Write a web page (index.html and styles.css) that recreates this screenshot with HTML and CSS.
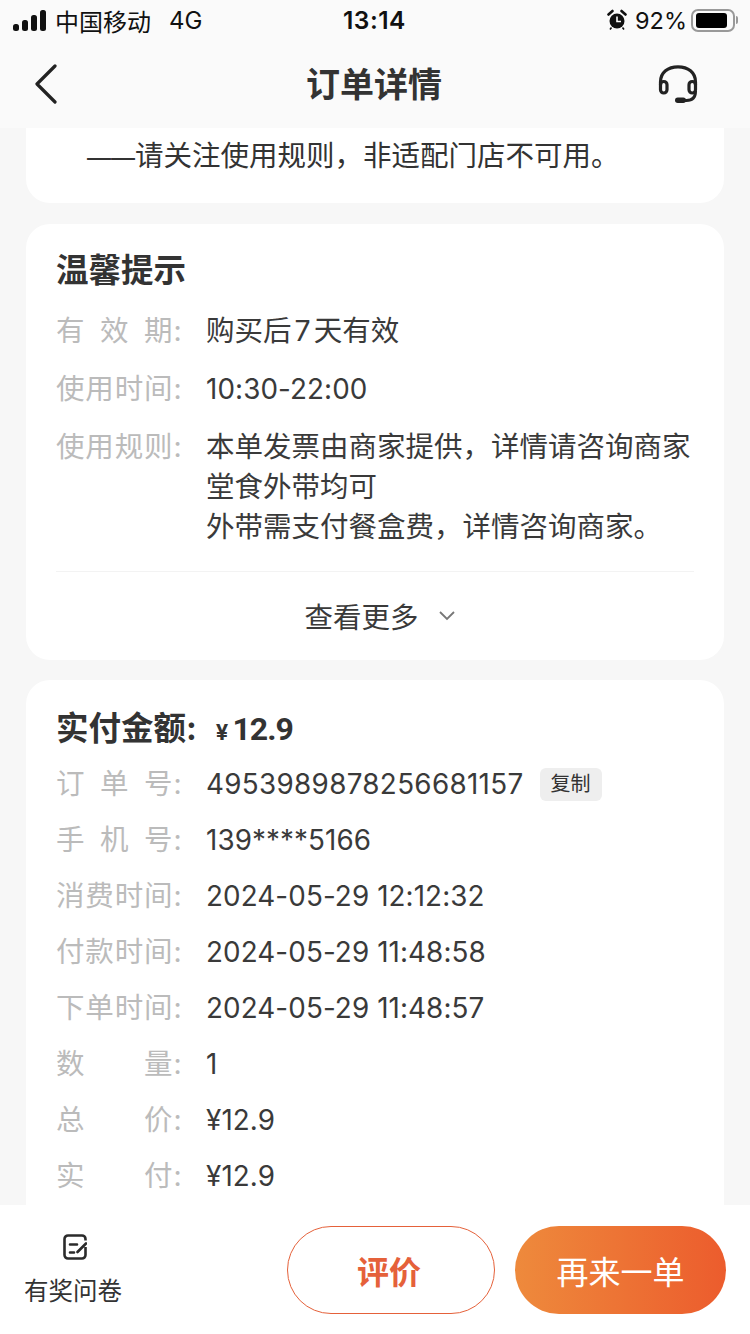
FILE: index.html
```html
<!DOCTYPE html>
<html lang="zh-CN">

<head>
    <meta charset="UTF-8" />
    <meta name="viewport" content="width=device-width, initial-scale=1.0" />
    <title>订单详情</title>
    <link rel="stylesheet" href="styles.css">
</head>

<body>
    <div class="page">
        <header class="top">
            <div class="status-bar">
                <div class="status-left">
                    <svg class="signal" width="34" height="21" viewBox="0 0 34 21">
                        <rect x="0" y="14" width="6" height="7" rx="2.5" />
                        <rect x="9" y="10" width="6" height="11" rx="2.5" />
                        <rect x="18" y="5" width="6" height="16" rx="2.5" />
                        <rect x="27" y="0" width="6" height="21" rx="2.5" />
                    </svg>
                    <span class="carrier">中国移动</span>
                    <span class="network">4G</span>
                </div>
                <div class="status-time">13:14</div>
                <div class="status-right">
                    <svg class="alarm" width="20" height="22" viewBox="0 0 20 22">
                        <circle cx="10" cy="12" r="7.500" fill="#111" />
                        <path d="M10 7.500v5h4" fill="none" stroke="#fff" stroke-width="1.600" />
                        <path d="M1.500 5.500 5.500 2M18.500 5.500 14.500 2" stroke="#111" stroke-width="2.600" stroke-linecap="round" />
                        <path d="M4.500 18.500 3 20.500M15.500 18.500 17 20.500" stroke="#111" stroke-width="1.600" />
                    </svg>
                    <span class="battery-text">92%</span>
                    <div class="battery"><div class="battery-level"></div></div>
                    <div class="battery-tip"></div>
                </div>
            </div>
            <nav class="nav-bar">
                <svg class="back-icon" width="26" height="40" viewBox="0 0 26 40">
                    <path d="M22 2 4 20l18 18" fill="none" stroke="#222" stroke-width="3.200" stroke-linecap="round" stroke-linejoin="round" />
                </svg>
                <h1 class="nav-title">订单详情</h1>
                <svg class="service-icon" width="40" height="38" viewBox="0 0 40 38">
                    <path d="M2.500 20v-3C2.500 7.500 10 1.800 20 1.800S37.500 7.500 37.500 17v3" fill="none" stroke="#222" stroke-width="3.200" />
                    <rect x="2.500" y="16.500" width="6.500" height="11.500" rx="3.200" fill="none" stroke="#222" stroke-width="3.200" />
                    <rect x="31" y="16.500" width="6.500" height="11.500" rx="3.200" fill="none" stroke="#222" stroke-width="3.200" />
                    <path d="M37.500 26c0 6-3 9.500-9 9.500H24" fill="none" stroke="#222" stroke-width="3" />
                    <rect x="17" y="32.500" width="11" height="5.500" rx="2.750" fill="#222" />
                </svg>
            </nav>
        </header>

        <main class="content">
            <section class="card card-tip">
                <p class="tip-line"><span class="tip-dash">——</span>请关注使用规则，非适配门店不可用。</p>
            </section>

            <section class="card card-notice">
                <h2 class="card-title">温馨提示</h2>
                <div class="info-row row-wide">
                    <span class="label"><span class="label-name">有 效 期</span>:</span>
                    <span class="value">购买后<span class="digit-gap">7</span>天有效</span>
                </div>
                <div class="info-row row-wide">
                    <span class="label"><span class="label-name">使用时间</span>:</span>
                    <span class="value value-num">10:30-22:00</span>
                </div>
                <div class="info-row row-wide">
                    <span class="label"><span class="label-name">使用规则</span>:</span>
                    <span class="value">本单发票由商家提供，详情请咨询商家<br>堂食外带均可<br>外带需支付餐盒费，详情咨询商家。</span>
                </div>
                <div class="more">
                    <span>查看更多</span>
                    <svg width="16" height="10" viewBox="0 0 16 10">
                        <path d="M1 1l7 7 7-7" fill="none" stroke="#777" stroke-width="1.800" />
                    </svg>
                </div>
            </section>

            <section class="card card-order">
                <h2 class="card-title pay-title">实付金额:<span class="yen">¥</span><span class="amount">12.9</span></h2>
                <div class="info-row">
                    <span class="label"><span class="label-name">订 单 号</span>:</span>
                    <span class="value value-num value-long">4953989878256681157</span>
                    <span class="copy-btn">复制</span>
                </div>
                <div class="info-row">
                    <span class="label"><span class="label-name">手 机 号</span>:</span>
                    <span class="value value-num">139****5166</span>
                </div>
                <div class="info-row">
                    <span class="label"><span class="label-name">消费时间</span>:</span>
                    <span class="value value-num">2024-05-29 12:12:32</span>
                </div>
                <div class="info-row">
                    <span class="label"><span class="label-name">付款时间</span>:</span>
                    <span class="value value-num">2024-05-29 11:48:58</span>
                </div>
                <div class="info-row">
                    <span class="label"><span class="label-name">下单时间</span>:</span>
                    <span class="value value-num">2024-05-29 11:48:57</span>
                </div>
                <div class="info-row">
                    <span class="label"><span class="label-name">数 量</span>:</span>
                    <span class="value value-num">1</span>
                </div>
                <div class="info-row">
                    <span class="label"><span class="label-name">总 价</span>:</span>
                    <span class="value value-num">¥12.9</span>
                </div>
                <div class="info-row">
                    <span class="label"><span class="label-name">实 付</span>:</span>
                    <span class="value value-num">¥12.9</span>
                </div>
            </section>
        </main>

        <footer class="bottom-bar">
            <div class="survey">
                <svg width="24" height="26" viewBox="0 0 24 26">
                    <path d="M22.500 6.500V5A3.500 3.500 0 0 0 19 1.500H5A3.500 3.500 0 0 0 1.500 5v16A3.500 3.500 0 0 0 5 24.500h14a3.500 3.500 0 0 0 3.500-3.500v-8" fill="none" stroke="#2b2b2b" stroke-width="2.600" />
                    <path d="M7 10.500h7M7 18.500h4" stroke="#2b2b2b" stroke-width="2.600" stroke-linecap="round" />
                    <path d="M14.500 18 23 9.500" stroke="#2b2b2b" stroke-width="2.600" stroke-linecap="round" />
                </svg>
                <span>有奖问卷</span>
            </div>
            <div class="actions">
                <button class="btn btn-outline">评价</button>
                <button class="btn btn-solid">再来一单</button>
            </div>
        </footer>
    </div>
</body>

</html>
```

FILE: styles.css
```css
* {
    box-sizing: border-box;
}

body {
    margin: 0;
    background: #f7f7f7;
    color: #333;
    font-family: Inter, "Noto Sans CJK SC", sans-serif;
}

.page {
    display: flex;
    flex-direction: column;
    height: 1334px;
    overflow: hidden;
}

.top {
    flex: none;
    background: #fafafa;
}

.status-bar {
    display: flex;
    align-items: center;
    justify-content: space-between;
    height: 40px;
    padding: 0 12px 0 13px;
    color: #111;
    font-size: 24px;
    position: relative;
}

.status-left,
.status-right {
    display: flex;
    align-items: center;
}

.signal {
    fill: #111;
    margin-right: 8px;
}

.network {
    margin-left: 18px;
}

.status-time {
    position: absolute;
    left: 343px;
    font-size: 24.5px;
    font-weight: 600;
    letter-spacing: 0.5px;
}

.alarm {
    margin-right: 8px;
}

.battery-text {
    margin-right: 4px;
    font-size: 23.5px;
}

.battery {
    width: 44px;
    height: 23px;
    padding: 2px 3px;
    border: 2px solid #999;
    border-radius: 7px;
}

.battery-level {
    width: 92%;
    height: 100%;
    background: #000;
    border-radius: 3px;
}

.battery-tip {
    width: 2px;
    height: 8px;
    margin-left: 1px;
    background: #999;
    border-radius: 0 2px 2px 0;
}

.nav-bar {
    display: grid;
    grid-template-columns: 1fr auto 1fr;
    align-items: center;
    height: 88px;
    padding: 0 52px;
}

.back-icon {
    margin-left: -19px;
}

.nav-title {
    margin: 0 2px 4px 0;
    font-size: 34px;
    font-weight: 700;
    color: #333;
}

.service-icon {
    justify-self: end;
}

.content {
    flex: 1;
    min-height: 0;
    overflow: hidden;
    padding: 0 26px;
}

.card {
    background: #fff;
    border-radius: 24px;
    margin-bottom: 21px;
    padding: 0 30px;
}

.card-tip {
    height: 75px;
    border-radius: 0 0 24px 24px;
    padding: 8px 0 0 61px;
}

.tip-line {
    margin: 0;
    font-size: 28.5px;
    line-height: 40px;
}

.tip-dash {
    font-size: 24px;
}

.card-notice {
    height: 436px;
    margin-bottom: 20px;
    padding-top: 25px;
}

.card-order {
    height: 600px;
    padding-top: 27px;
}

.card-title {
    margin: 0 0 18px;
    font-size: 32.5px;
    line-height: 44px;
    font-weight: 700;
    color: #333;
}

.pay-title {
    display: flex;
    align-items: baseline;
    margin-bottom: 10px;
}

.yen {
    font-size: 22px;
    margin-left: 19px;
    margin-right: 4px;
}

.amount {
    font-family: Roboto, sans-serif;
    font-size: 32px;
    letter-spacing: -1px;
}

.info-row {
    display: flex;
    align-items: flex-start;
    font-size: 28.5px;
    line-height: 40px;
    margin-bottom: 16px;
}

.row-wide {
    margin-bottom: 18px;
}

.label {
    flex: none;
    width: 150px;
    color: #bbb;
}

.label-name {
    display: inline-block;
    width: 116.5px;
    margin-right: 1px;
    text-align-last: justify;
}

.value {
    color: #3a3a3a;
}

.value-num {
    font-size: 27.8px;
    letter-spacing: 0.1px;
}

.value-long {
    letter-spacing: 0.32px;
}

.digit-gap {
    margin: 0 3px;
}

.copy-btn {
    align-self: center;
    margin-left: 16px;
    padding: 0 11px;
    height: 33px;
    line-height: 33px;
    font-size: 20px;
    color: #333;
    background: #eee;
    border-radius: 6px;
}

.more {
    display: flex;
    align-items: center;
    justify-content: center;
    gap: 20px;
    height: 88px;
    margin-top: 24px;
    padding-left: 9px;
    border-top: 1px solid #f3f3f3;
    font-size: 28.5px;
    color: #3a3a3a;
}

.bottom-bar {
    flex: none;
    display: flex;
    justify-content: space-between;
    height: 129px;
    padding: 21px 24px 0 25px;
    background: #fff;
}

.survey {
    display: flex;
    flex-direction: column;
    align-items: center;
    width: 96px;
    padding-top: 8px;
    gap: 14px;
    font-size: 24.5px;
    line-height: 34px;
    white-space: nowrap;
    color: #333;
}

.survey svg {
    flex: none;
    margin-left: 3px;
}

.actions {
    display: flex;
    gap: 20px;
}

.btn {
    height: 88px;
    border-radius: 44px;
    font-family: inherit;
    font-size: 32px;
}

.btn-outline {
    width: 208px;
    padding: 0 4px 0 0;
    background: #fff;
    border: 1px solid #e5613a;
    color: #e5613a;
    font-weight: 700;
}

.btn-solid {
    width: 211px;
    border: none;
    color: #fff;
    background: linear-gradient(90deg, #ee8a3c, #ec5c2d);
}
```
